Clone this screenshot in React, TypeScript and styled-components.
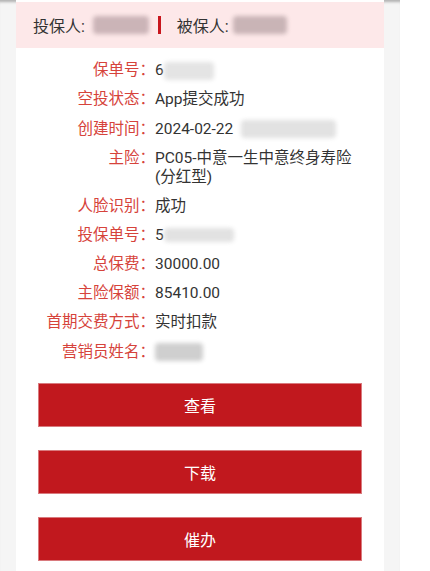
import React from "react";
import styled, { createGlobalStyle } from "styled-components";

const Global = createGlobalStyle`
  html, body { margin: 0; padding: 0; background: #ffffff; }
  body { font-family: Roboto, "Noto Sans CJK SC", sans-serif; }
  * { box-sizing: border-box; }
`;

const Page = styled.div`
  width: 400px;
  min-height: 571px;
  background: #f5f5f5;
  padding: 0 16px;
  box-shadow: inset 0 4px 3px -2px rgba(0, 0, 0, 0.28);
`;

const Card = styled.div`
  background: #ffffff;
  min-height: 571px;
  padding-top: 2px;
`;

const Header = styled.div`
  height: 46px;
  background: #fde8e9;
  display: flex;
  align-items: center;
  padding-left: 17px;
  font-size: 16px;
  color: #333;
`;

const Party = styled.div`
  display: flex;
  align-items: center;
`;

const Divider = styled.span`
  width: 3px;
  height: 18px;
  background: #c8161d;
  margin: 0 16px 0 9px;
`;

const Redact = styled.span<{ $w: number; $h?: number; $c?: string }>`
  display: inline-block;
  width: ${(p) => p.$w}px;
  height: ${(p) => p.$h ?? 18}px;
  background: ${(p) => p.$c ?? "#dcdcdc"};
  filter: blur(2px);
  border-radius: 4px;
  vertical-align: middle;
`;

const List = styled.div`
  padding: 8px 16px 0 0;
`;

const Row = styled.div`
  display: flex;
  padding: 5.2px 0;
  font-size: 15.5px;
  line-height: 18.8px;
`;

const Label = styled.div`
  width: 139px;
  flex-shrink: 0;
  text-align: right;
  color: #d6433b;
  white-space: nowrap;
`;

const Value = styled.div`
  flex: 1;
  color: #333;
  display: flex;
  align-items: center;
  flex-wrap: wrap;
`;

const Buttons = styled.div`
  display: flex;
  flex-direction: column;
  gap: 23px;
  padding: 16px 22px 0;
`;

const Button = styled.button`
  height: 44px;
  width: 100%;
  background: #c1181e;
  border: 1px solid #d97a7e;
  color: #fff;
  font-family: Roboto, "Noto Sans CJK SC", sans-serif;
  font-size: 16px;
  cursor: pointer;
`;

const rows: { label: string; value: React.ReactNode }[] = [
  { label: "保单号：", value: <>6<Redact $w={50} $c="#e4e4e4" /></> },
  { label: "空投状态：", value: "App提交成功" },
  { label: "创建时间：", value: <>2024-02-22&nbsp;&nbsp;<Redact $w={95} $c="#e2e2e2" /></> },
  { label: "主险：", value: "PC05-中意一生中意终身寿险(分红型)" },
  { label: "人脸识别：", value: "成功" },
  { label: "投保单号：", value: <>5<Redact $w={70} $h={14} $c="#e2e2e2" /></> },
  { label: "总保费：", value: "30000.00" },
  { label: "主险保额：", value: "85410.00" },
  { label: "首期交费方式：", value: "实时扣款" },
  { label: "营销员姓名：", value: <Redact $w={48} $c="#cfcfcf" /> },
];

export default function App() {
  return (
    <>
      <Global />
      <Page>
        <Card>
          <Header>
            <Party>
              投保人:&nbsp;&nbsp;<Redact $w={56} $c="#cbb4b7" />
            </Party>
            <Divider />
            <Party>
              被保人:&nbsp;<Redact $w={54} $c="#c9b4b6" />
            </Party>
          </Header>
          <List>
            {rows.map((r) => (
              <Row key={r.label}>
                <Label>{r.label}</Label>
                <Value>{r.value}</Value>
              </Row>
            ))}
          </List>
          <Buttons>
            <Button>查看</Button>
            <Button>下载</Button>
            <Button>催办</Button>
          </Buttons>
        </Card>
      </Page>
    </>
  );
}
